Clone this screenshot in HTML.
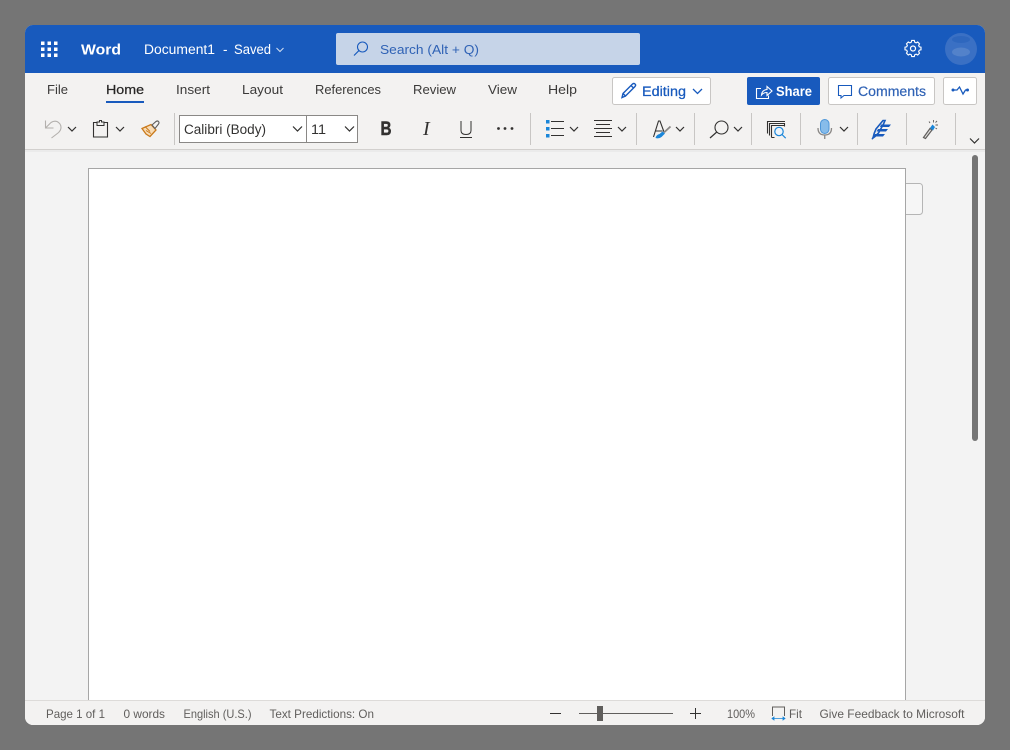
<!DOCTYPE html>
<html lang="en">
<head>
<meta charset="utf-8">
<title>Word</title>
<style>
html,body{margin:0;padding:0;width:1010px;height:750px;overflow:hidden;background:#757575}
svg{display:block;position:absolute;left:0;top:0}
text{font-family:"Liberation Sans",sans-serif}
.tab{font-size:13px;fill:#3b3a39}
.st{font-size:12px;fill:#605e5c}
.chev{fill:none;stroke:#323130;stroke-width:1.2}
.sep{stroke:#c8c6c4;stroke-width:1}
</style>
</head>
<body>
<svg width="1010" height="750" viewBox="0 0 1010 750" xmlns="http://www.w3.org/2000/svg">
<rect x="0" y="0" width="1010" height="750" fill="#757575"/>
<clipPath id="win"><rect x="25" y="25" width="960" height="700" rx="8"/></clipPath>
<g clip-path="url(#win)">
<rect x="25" y="25" width="960" height="700" fill="#f3f3f3"/>
<rect x="25" y="25" width="960" height="48" fill="#185abd"/>
<rect x="25" y="73" width="960" height="77" fill="#f3f2f1"/>
<rect x="25" y="149" width="960" height="1" fill="#d2d0ce"/>
<rect x="25" y="150" width="960" height="2" fill="#ebebeb"/>

<!-- comment stub -->
<rect x="895" y="183.500" width="27.500" height="31" rx="3" fill="#f6f6f6" stroke="#b5b5b5"/>
<!-- page -->
<rect x="88.500" y="168.500" width="817" height="540" fill="#fff" stroke="#a6a6a6"/>
<!-- scrollbar -->
<rect x="972" y="155" width="6" height="286" rx="3" fill="#757575"/>

<!-- status -->
<rect x="25" y="700" width="960" height="25" fill="#f3f2f1"/>
<rect x="25" y="700" width="960" height="1" fill="#dddbd9"/>
</g>

<!-- waffle -->
<g fill="#fff">
<rect x="41" y="41.500" width="3.500" height="3.500"/><rect x="47.500" y="41.500" width="3.500" height="3.500"/><rect x="54" y="41.500" width="3.500" height="3.500"/>
<rect x="41" y="47.500" width="3.500" height="3.500"/><rect x="47.500" y="47.500" width="3.500" height="3.500"/><rect x="54" y="47.500" width="3.500" height="3.500"/>
<rect x="41" y="53.500" width="3.500" height="3.500"/><rect x="47.500" y="53.500" width="3.500" height="3.500"/><rect x="54" y="53.500" width="3.500" height="3.500"/>
</g>
<text x="81" y="54.500" font-size="15" font-weight="700" fill="#fff" textLength="40" lengthAdjust="spacingAndGlyphs">Word</text>
<text x="144" y="54" font-size="13.500" fill="#fff" textLength="71" lengthAdjust="spacingAndGlyphs">Document1</text>
<text x="223" y="54" font-size="13.500" fill="#fff">-</text>
<text x="234" y="54" font-size="13.500" fill="#fff" textLength="37" lengthAdjust="spacingAndGlyphs">Saved</text>
<path d="M276.500 48l3.500 3.500 3.500-3.500" fill="none" stroke="#d5e0f2" stroke-width="1"/>

<!-- search -->
<rect x="336" y="33" width="304" height="32" rx="2" fill="#c6d4e8"/>
<circle cx="362.500" cy="47" r="5" fill="none" stroke="#185abd" stroke-width="1.100"/>
<path d="M359 50.500L354 55.500" fill="none" stroke="#185abd" stroke-width="1.200"/>
<text x="380" y="54" font-size="13" fill="#2f62b5" textLength="99" lengthAdjust="spacingAndGlyphs">Search (Alt + Q)</text>

<!-- gear -->
<g fill="none" stroke="#fff">
<circle cx="913" cy="48.500" r="2.500" stroke-width="1.200"/>
<path transform="translate(913 48.500) scale(.87) translate(-913 -50.700)" d="M911.500 41.500h3l.5 2 1.600.7 1.800-1 2.100 2.100-1 1.800.7 1.600 2 .5v3l-2 .5-.7 1.600 1 1.800-2.100 2.100-1.800-1-1.600.7-.5 2h-3l-.5-2-1.600-.7-1.800 1-2.100-2.100 1-1.800-.7-1.600-2-.5v-3l2-.5.7-1.600-1-1.800 2.100-2.100 1.800 1 1.600-.7z" stroke-width="1.300"/>
</g>
<!-- avatar -->
<circle cx="961" cy="49" r="16" fill="#3a70c4"/>
<ellipse cx="961" cy="39.500" rx="9" ry="3.500" fill="#2e67be"/>
<ellipse cx="961" cy="52" rx="9" ry="4.500" fill="#5382ca"/>

<!-- tabs -->
<text class="tab" x="47" y="94" textLength="21" lengthAdjust="spacingAndGlyphs">File</text>
<text class="tab" x="106" y="94" textLength="38" lengthAdjust="spacingAndGlyphs" style="stroke:#323130;stroke-width:.25;fill:#252423">Home</text>
<rect x="106" y="101" width="38" height="2" fill="#185abd"/>
<text class="tab" x="176" y="94" textLength="34" lengthAdjust="spacingAndGlyphs">Insert</text>
<text class="tab" x="242" y="94" textLength="41" lengthAdjust="spacingAndGlyphs">Layout</text>
<text class="tab" x="315" y="94" textLength="66" lengthAdjust="spacingAndGlyphs">References</text>
<text class="tab" x="413" y="94" textLength="43" lengthAdjust="spacingAndGlyphs">Review</text>
<text class="tab" x="488" y="94" textLength="29" lengthAdjust="spacingAndGlyphs">View</text>
<text class="tab" x="548" y="94" textLength="29" lengthAdjust="spacingAndGlyphs">Help</text>

<!-- editing -->
<rect x="612.500" y="77.500" width="98" height="27" rx="2" fill="#fff" stroke="#c8c6c4"/>
<path d="M622 97.500l1-4 9.500-9.500q1.300-1 2.500 0t0 2.500l-9.500 9.500zM623 93.500l3 3M631 85.500l3 3" fill="none" stroke="#185abd" stroke-width="1.400"/>
<text x="642" y="96" font-size="13.500" fill="#185abd" stroke="#185abd" stroke-width=".25" textLength="44" lengthAdjust="spacingAndGlyphs">Editing</text>
<path d="M693 89l4.500 4.500 4.500-4.500" fill="none" stroke="#185abd" stroke-width="1.300"/>

<!-- share -->
<rect x="747" y="77" width="73" height="28" rx="2" fill="#185abd"/>
<path d="M761 88.500h-4.500v10h12v-3" fill="none" stroke="#fff" stroke-width="1.100"/>
<path d="M761.500 95q.5-5 5.500-5.500v-3l5 4.500-5 4.500v-3q-3.500 0-5.500 2.500z" fill="none" stroke="#fff" stroke-width="1.100"/>
<text x="776" y="96" font-size="13.500" font-weight="700" fill="#fff" textLength="36" lengthAdjust="spacingAndGlyphs">Share</text>

<!-- comments -->
<rect x="828.500" y="77.500" width="106" height="27" rx="2" fill="#fff" stroke="#c8c6c4"/>
<path d="M838.500 85.500h13v10h-7.500l-3 2.500v-2.500h-2.500z" fill="none" stroke="#185abd" stroke-width="1.100"/>
<text x="858" y="96" font-size="13.500" fill="#2f62b5" stroke="#2f62b5" stroke-width=".2" textLength="68" lengthAdjust="spacingAndGlyphs">Comments</text>

<!-- activity -->
<rect x="943.500" y="77.500" width="33" height="27" rx="2" fill="#fff" stroke="#c8c6c4"/>
<path d="M953 90h4l2.500-3 3.500 7 2.500-4h2.500" fill="none" stroke="#185abd" stroke-width="1.300"/>
<circle cx="953" cy="90" r="1.500" fill="#185abd"/><circle cx="967.500" cy="90" r="1.500" fill="#185abd"/>

<!-- separators -->
<g class="sep">
<line x1="174.500" y1="113" x2="174.500" y2="145"/>
<line x1="530.500" y1="113" x2="530.500" y2="145"/>
<line x1="636.500" y1="113" x2="636.500" y2="145"/>
<line x1="694.500" y1="113" x2="694.500" y2="145"/>
<line x1="751.500" y1="113" x2="751.500" y2="145"/>
<line x1="800.500" y1="113" x2="800.500" y2="145"/>
<line x1="857.500" y1="113" x2="857.500" y2="145"/>
<line x1="906.500" y1="113" x2="906.500" y2="145"/>
<line x1="955.500" y1="113" x2="955.500" y2="145"/>
</g>

<!-- undo -->
<path d="M45.500 120.500v7.500h8M45.500 128L51 122.500q3-2 6-1 4 2 4 6 0 3-3 5.500l-6.500 5" fill="none" stroke="#b3b0ad" stroke-width="1.100"/>
<path class="chev" d="M68 127l4 4 4-4"/>
<!-- clipboard -->
<path d="M97 122.500h-3.500v14.500h14v-14.500h-3.500" fill="none" stroke="#323130" stroke-width="1.100"/>
<path d="M97 125.500v-3.500h2.500v-1.500h2v1.500h2.500v3.500z" fill="#f3f2f1" stroke="#323130" stroke-width="1"/>
<path class="chev" d="M116 127l4 4 4-4"/>
<!-- format painter -->
<path d="M142 128.500l9-4 5 5.500-6 6.500-4-2.500z" fill="#f8dcb6" stroke="#ca7a1b" stroke-width="1.300"/>
<path d="M146 130.500l5 3M145 126.500l5 5" stroke="#ca7a1b" fill="none"/>
<path d="M152 125l4-3.500q1.500-1 2.500 0t0 2.500l-3.500 4.500z" fill="#f3f2f1" stroke="#605e5c" stroke-width="1.100"/>

<!-- font boxes -->
<rect x="179.500" y="115.500" width="178" height="27" fill="#fff" stroke="#8a8886"/>
<line x1="306.500" y1="115" x2="306.500" y2="143" stroke="#8a8886"/>
<text x="184" y="134" font-size="13.500" fill="#323130" textLength="82" lengthAdjust="spacingAndGlyphs">Calibri (Body)</text>
<path class="chev" d="M293 126.500l4.500 4.500 4.500-4.500"/>
<text x="311" y="134" font-size="13.500" fill="#323130" textLength="15" lengthAdjust="spacingAndGlyphs">11</text>
<path class="chev" d="M345 126.500l4.500 4.500 4.500-4.500"/>

<!-- B I U -->
<text x="380.500" y="135" font-size="19.500" font-weight="700" fill="#323130" stroke="#323130" stroke-width=".5" textLength="11" lengthAdjust="spacingAndGlyphs">B</text>
<text x="423" y="135" font-size="20" style="font-family:'Liberation Serif',serif;font-style:italic" fill="#323130">I</text>
<path d="M461 121v9.500q0 4 5 4t5-4V121" fill="none" stroke="#323130" stroke-width="1"/>
<rect x="460" y="137" width="12" height="1" fill="#323130"/>
<g fill="#323130"><circle cx="498.500" cy="128.500" r="1.400"/><circle cx="505" cy="128.500" r="1.400"/><circle cx="512" cy="128.500" r="1.400"/></g>

<!-- bullets -->
<g fill="#1a86d9"><rect x="546" y="120" width="3.500" height="3.500"/><rect x="546" y="127" width="3.500" height="3.500"/><rect x="546" y="134" width="3.500" height="3.500"/></g>
<g stroke="#323130" stroke-width="1"><line x1="551" y1="121.500" x2="564" y2="121.500"/><line x1="551" y1="128.500" x2="564" y2="128.500"/><line x1="551" y1="135.500" x2="564" y2="135.500"/></g>
<path class="chev" d="M570 127l4 4 4-4"/>
<!-- align -->
<g stroke="#323130" stroke-width="1"><line x1="594" y1="120.500" x2="612" y2="120.500"/><line x1="596" y1="124.500" x2="610" y2="124.500"/><line x1="594" y1="128.500" x2="612" y2="128.500"/><line x1="596" y1="132.500" x2="610" y2="132.500"/><line x1="594" y1="136.500" x2="612" y2="136.500"/></g>
<path class="chev" d="M618 127l4 4 4-4"/>
<!-- styles A -->
<path d="M653.500 137l5-16h1.500l4 11M655.500 131h7" fill="none" stroke="#323130" stroke-width="1.100"/>
<path d="M655.500 138q3.500 1 6-1l3.500-3.500-2.500-2-3 2.500q-3 .5-4 4z" fill="#1a86d9"/>
<path d="M664 132.500l6.500-6" fill="none" stroke="#8a8886" stroke-width="1.800"/>
<path class="chev" d="M676 127l4 4 4-4"/>
<!-- find -->
<circle cx="721.500" cy="127.500" r="6.500" fill="none" stroke="#323130" stroke-width="1.100"/>
<path d="M716.800 132L710 138" stroke="#323130" stroke-width="1.200" fill="none"/>
<path class="chev" d="M734 127l4 4 4-4"/>
<!-- researcher -->
<path d="M767.500 133.500v-12h17.500M769.500 135.500v-12h15v3M771.500 137.500v-12h13v1M771.500 137.500h3" fill="none" stroke="#323130" stroke-width="1.100"/>
<circle cx="779" cy="131.500" r="4.200" fill="#eef5fb" stroke="#1a86d9" stroke-width="1.200"/>
<path d="M782 134.500l3.700 3.700" stroke="#1a86d9" stroke-width="1.200" fill="none"/>
<!-- mic -->
<rect x="820.500" y="119.500" width="8.500" height="14" rx="4.250" fill="#87bcea" stroke="#4d96d9" stroke-width="1"/>
<path d="M818 128q0 7 6.750 7t6.750-7M824.750 135v4" fill="none" stroke="#8a8886" stroke-width="1.300"/>
<path class="chev" d="M840 127l4 4 4-4"/>
<!-- designer -->
<path d="M873 138q1-5 3-9l7-8.500h2l-1.500 3.500-5 9-3.500 3.500z" fill="none" stroke="#185abd" stroke-width="1.600"/>
<path d="M881 124.500h10l-2 2.500h-9zM878 129h10l-2 2.500h-9.500zM875 134h10l-2 2.500h-9.500z" fill="#185abd"/>
<path d="M872 139l3-4" stroke="#185abd" stroke-width="1.400"/>
<!-- wand -->
<path d="M923.500 137.500l6.500-9 2 1.500-6.500 8.500z" fill="#e1dfdd" stroke="#605e5c" stroke-width="1.200"/>
<path d="M930 128l2.500-3.500 2.500 2.500-2 3.500z" fill="#1a86d9"/>
<path d="M933.500 120v2.500M938 125h-2.500M929 121.500l1 1.500M937 121l-1.500 1.500M937 129l-1.500-1" stroke="#605e5c" stroke-width=".9" fill="none"/>
<!-- expand -->
<path class="chev" d="M970 138.500l4.500 4.500 4.500-4.500"/>

<!-- status -->
<text class="st" x="46" y="718" textLength="59" lengthAdjust="spacingAndGlyphs">Page 1 of 1</text>
<text class="st" x="123.500" y="718" textLength="41.500" lengthAdjust="spacingAndGlyphs">0 words</text>
<text class="st" x="183.500" y="718" textLength="68" lengthAdjust="spacingAndGlyphs">English (U.S.)</text>
<text class="st" x="269.500" y="718" textLength="104.500" lengthAdjust="spacingAndGlyphs">Text Predictions: On</text>
<rect x="550" y="713" width="11" height="1" fill="#323130"/>
<rect x="579" y="713" width="94" height="1" fill="#605e5c"/>
<rect x="597" y="706" width="6" height="15" fill="#605e5c"/>
<rect x="690" y="713" width="11" height="1" fill="#323130"/>
<rect x="695" y="708" width="1" height="11" fill="#323130"/>
<text class="st" x="727" y="718" textLength="28" lengthAdjust="spacingAndGlyphs">100%</text>
<path d="M772.500 716v-9h12v9" fill="none" stroke="#605e5c" stroke-width="1"/>
<path d="M772 718.500h13M772 718.500l2-1.500v3zM785 718.500l-2-1.500v3z" fill="#1a86d9" stroke="#1a86d9" stroke-width=".8"/>
<text class="st" x="789" y="718" textLength="13" lengthAdjust="spacingAndGlyphs">Fit</text>
<text class="st" x="819.500" y="718" textLength="145" lengthAdjust="spacingAndGlyphs">Give Feedback to Microsoft</text>
</svg>
</body>
</html>
